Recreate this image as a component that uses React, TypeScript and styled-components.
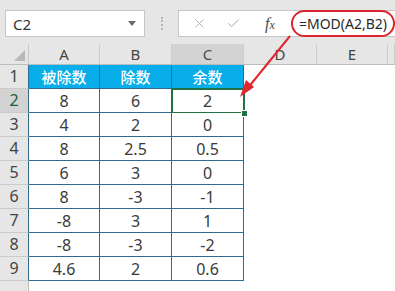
import * as React from 'react';
import styled, { createGlobalStyle } from 'styled-components';
import { X, Check } from 'lucide-react';

const GlobalStyle = createGlobalStyle`
  html, body {
    margin: 0;
    padding: 0;
    background: #ffffff;
  }
  body {
    font-family: "Noto Sans", "Noto Sans CJK SC", sans-serif;
  }
`;

const columns = ['A', 'B', 'C', 'D', 'E', ''];
const activeCol = 2;
const activeRow = 1;

const rows = [
  ['被除数', '除数', '余数'],
  ['8', '6', '2'],
  ['4', '2', '0'],
  ['8', '2.5', '0.5'],
  ['6', '3', '0'],
  ['8', '-3', '-1'],
  ['-8', '3', '1'],
  ['-8', '-3', '-2'],
  ['4.6', '2', '0.6'],
];

const App: React.FC = () => {
  return (
    <Page>
      <GlobalStyle />
      <Toolbar>
        <NameBox>
          C2
          <DropArrow />
        </NameBox>
        <Gripper />
        <FormulaBox>
          <IconSlot $w={34}>
            <X size={15} color="#a8a8a8" strokeWidth={1.4} />
          </IconSlot>
          <IconSlot $w={34}>
            <Check size={15} color="#a8a8a8" strokeWidth={1.6} />
          </IconSlot>
          <IconSlot $w={40}>
            <Fx>
              f<small>x</small>
            </Fx>
          </IconSlot>
          <Formula>=MOD(A2,B2)</Formula>
        </FormulaBox>
      </Toolbar>

      <Sheet>
        <Corner>
          <CornerMark />
        </Corner>
        {columns.map((c, i) => (
          <ColHead key={c + i} $active={i === activeCol}>
            {c}
          </ColHead>
        ))}

        {rows.map((row, r) => (
          <React.Fragment key={r}>
            <RowHead $active={r === activeRow} $inTable>
              {r + 1}
            </RowHead>
            {row.map((v, c) =>
              r === 0 ? (
                <TitleCell key={c}>{v}</TitleCell>
              ) : (
                <DataCell key={c} $selected={r === activeRow && c === activeCol}>
                  {v}
                </DataCell>
              )
            )}
            <EmptyCell />
            <EmptyCell />
            <EmptyCell />
          </React.Fragment>
        ))}

        <RowHead />
        {columns.map((c, i) => (
          <EmptyCell key={'r10' + i} />
        ))}
      </Sheet>

      <ArrowLayer width="395" height="291" viewBox="0 0 395 291">
        <line x1="290" y1="36" x2="247" y2="89" stroke="#e0262e" strokeWidth="2" />
        <polygon points="240,97 254,87 246,80" fill="#e0262e" />
      </ArrowLayer>
    </Page>
  );
};

export default App;

const Page = styled.div`
  position: relative;
  width: 395px;
  height: 291px;
  overflow: hidden;
  background: #ffffff;
`;

const Toolbar = styled.div`
  display: flex;
  align-items: flex-start;
  height: 44px;
  box-sizing: border-box;
  padding: 10px 0 0 5px;
  background: #e6e6e6;
`;

const NameBox = styled.div`
  display: flex;
  align-items: center;
  justify-content: space-between;
  width: 140px;
  height: 27px;
  box-sizing: border-box;
  padding: 0 8px 0 7px;
  background: #ffffff;
  border: 1px solid #c6c6c6;
  font-size: 15px;
  color: #333333;
`;

const DropArrow = styled.span`
  width: 0;
  height: 0;
  border-left: 4px solid transparent;
  border-right: 4px solid transparent;
  border-top: 5px solid #6a6a6a;
`;

const Gripper = styled.div`
  width: 2px;
  height: 13px;
  margin: 7px 13px 0 16px;
  border-left: 2px dotted #b4b4b4;
`;

const FormulaBox = styled.div`
  flex: 1;
  display: flex;
  align-items: center;
  height: 27px;
  box-sizing: border-box;
  padding-left: 3px;
  background: #ffffff;
  border: 1px solid #c6c6c6;
  border-right: none;
`;

const IconSlot = styled.div<{ $w: number }>`
  display: flex;
  align-items: center;
  justify-content: center;
  width: ${(p) => p.$w}px;
  flex: none;
`;

const Fx = styled.span`
  font-family: "Liberation Serif", serif;
  font-style: italic;
  font-size: 16px;
  color: #4a4a4a;

  small {
    font-size: 12px;
  }
`;

const Formula = styled.span`
  display: flex;
  align-items: center;
  justify-content: center;
  width: 104px;
  height: 27px;
  box-sizing: border-box;
  margin: -1px 0 -1px 1px;
  border: 2px solid #d9262f;
  border-radius: 14px;
  font-size: 14px;
  color: #2a2a2a;
`;

const Sheet = styled.div`
  display: grid;
  grid-template-columns: 29px 71px 72px 72px 73px 71px 1fr;
  grid-template-rows: 21px repeat(10, 24px);
  font-family: "Noto Sans", "Noto Sans CJK SC", sans-serif;
`;

const Corner = styled.div`
  display: flex;
  align-items: flex-end;
  justify-content: flex-end;
  padding: 0 3px 3px 0;
  background: #e6e6e6;
  border-right: 1px solid #c8c8c8;
  border-bottom: 1px solid #bcbcbc;
`;

const CornerMark = styled.span`
  width: 0;
  height: 0;
  border-left: 11px solid transparent;
  border-bottom: 11px solid #b8b8b8;
`;

const ColHead = styled.div<{ $active?: boolean }>`
  display: flex;
  align-items: center;
  justify-content: center;
  background: ${(p) => (p.$active ? '#d3d3d3' : '#e6e6e6')};
  border-right: 1px solid #cbcbcb;
  border-bottom: 1px solid #bcbcbc;
  font-size: 15px;
  color: ${(p) => (p.$active ? '#4a4a4a' : '#444444')};
`;

const RowHead = styled.div<{ $active?: boolean; $inTable?: boolean }>`
  display: flex;
  align-items: flex-end;
  justify-content: center;
  padding-bottom: 1px;
  background: ${(p) => (p.$active ? '#d3d3d3' : '#e6e6e6')};
  border-right: 1px solid ${(p) => (p.$inTable ? '#2f6b8f' : '#bcbcbc')};
  border-bottom: 1px solid #cbcbcb;
  font-size: 16px;
  color: ${(p) => (p.$active ? '#1f5c3e' : '#444444')};
`;

const TitleCell = styled.div`
  display: flex;
  align-items: center;
  justify-content: center;
  background: #08aeea;
  border-right: 1px solid #2f6b8f;
  border-bottom: 1px solid #2f6b8f;
  font-family: "Noto Sans CJK SC", sans-serif;
  font-size: 15px;
  font-weight: 500;
  color: #ffffff;
`;

const DataCell = styled.div<{ $selected?: boolean }>`
  position: relative;
  display: flex;
  align-items: center;
  justify-content: center;
  background: #ffffff;
  border-right: 1px solid #2f6b8f;
  border-bottom: 1px solid #2f6b8f;
  font-size: 16px;
  color: #3a3a3a;

  ${(p) =>
    p.$selected &&
    `
    &::after {
      content: '';
      position: absolute;
      top: -1px;
      left: -1px;
      right: -2px;
      bottom: -2px;
      border: 2px solid #217346;
    }
    &::before {
      content: '';
      position: absolute;
      right: -5px;
      bottom: -5px;
      width: 5px;
      height: 5px;
      background: #217346;
      border: 1px solid #ffffff;
      z-index: 1;
    }
  `}
`;

const EmptyCell = styled.div`
  background: #ffffff;
`;

const ArrowLayer = styled.svg`
  position: absolute;
  left: 0;
  top: 0;
  pointer-events: none;
`;
